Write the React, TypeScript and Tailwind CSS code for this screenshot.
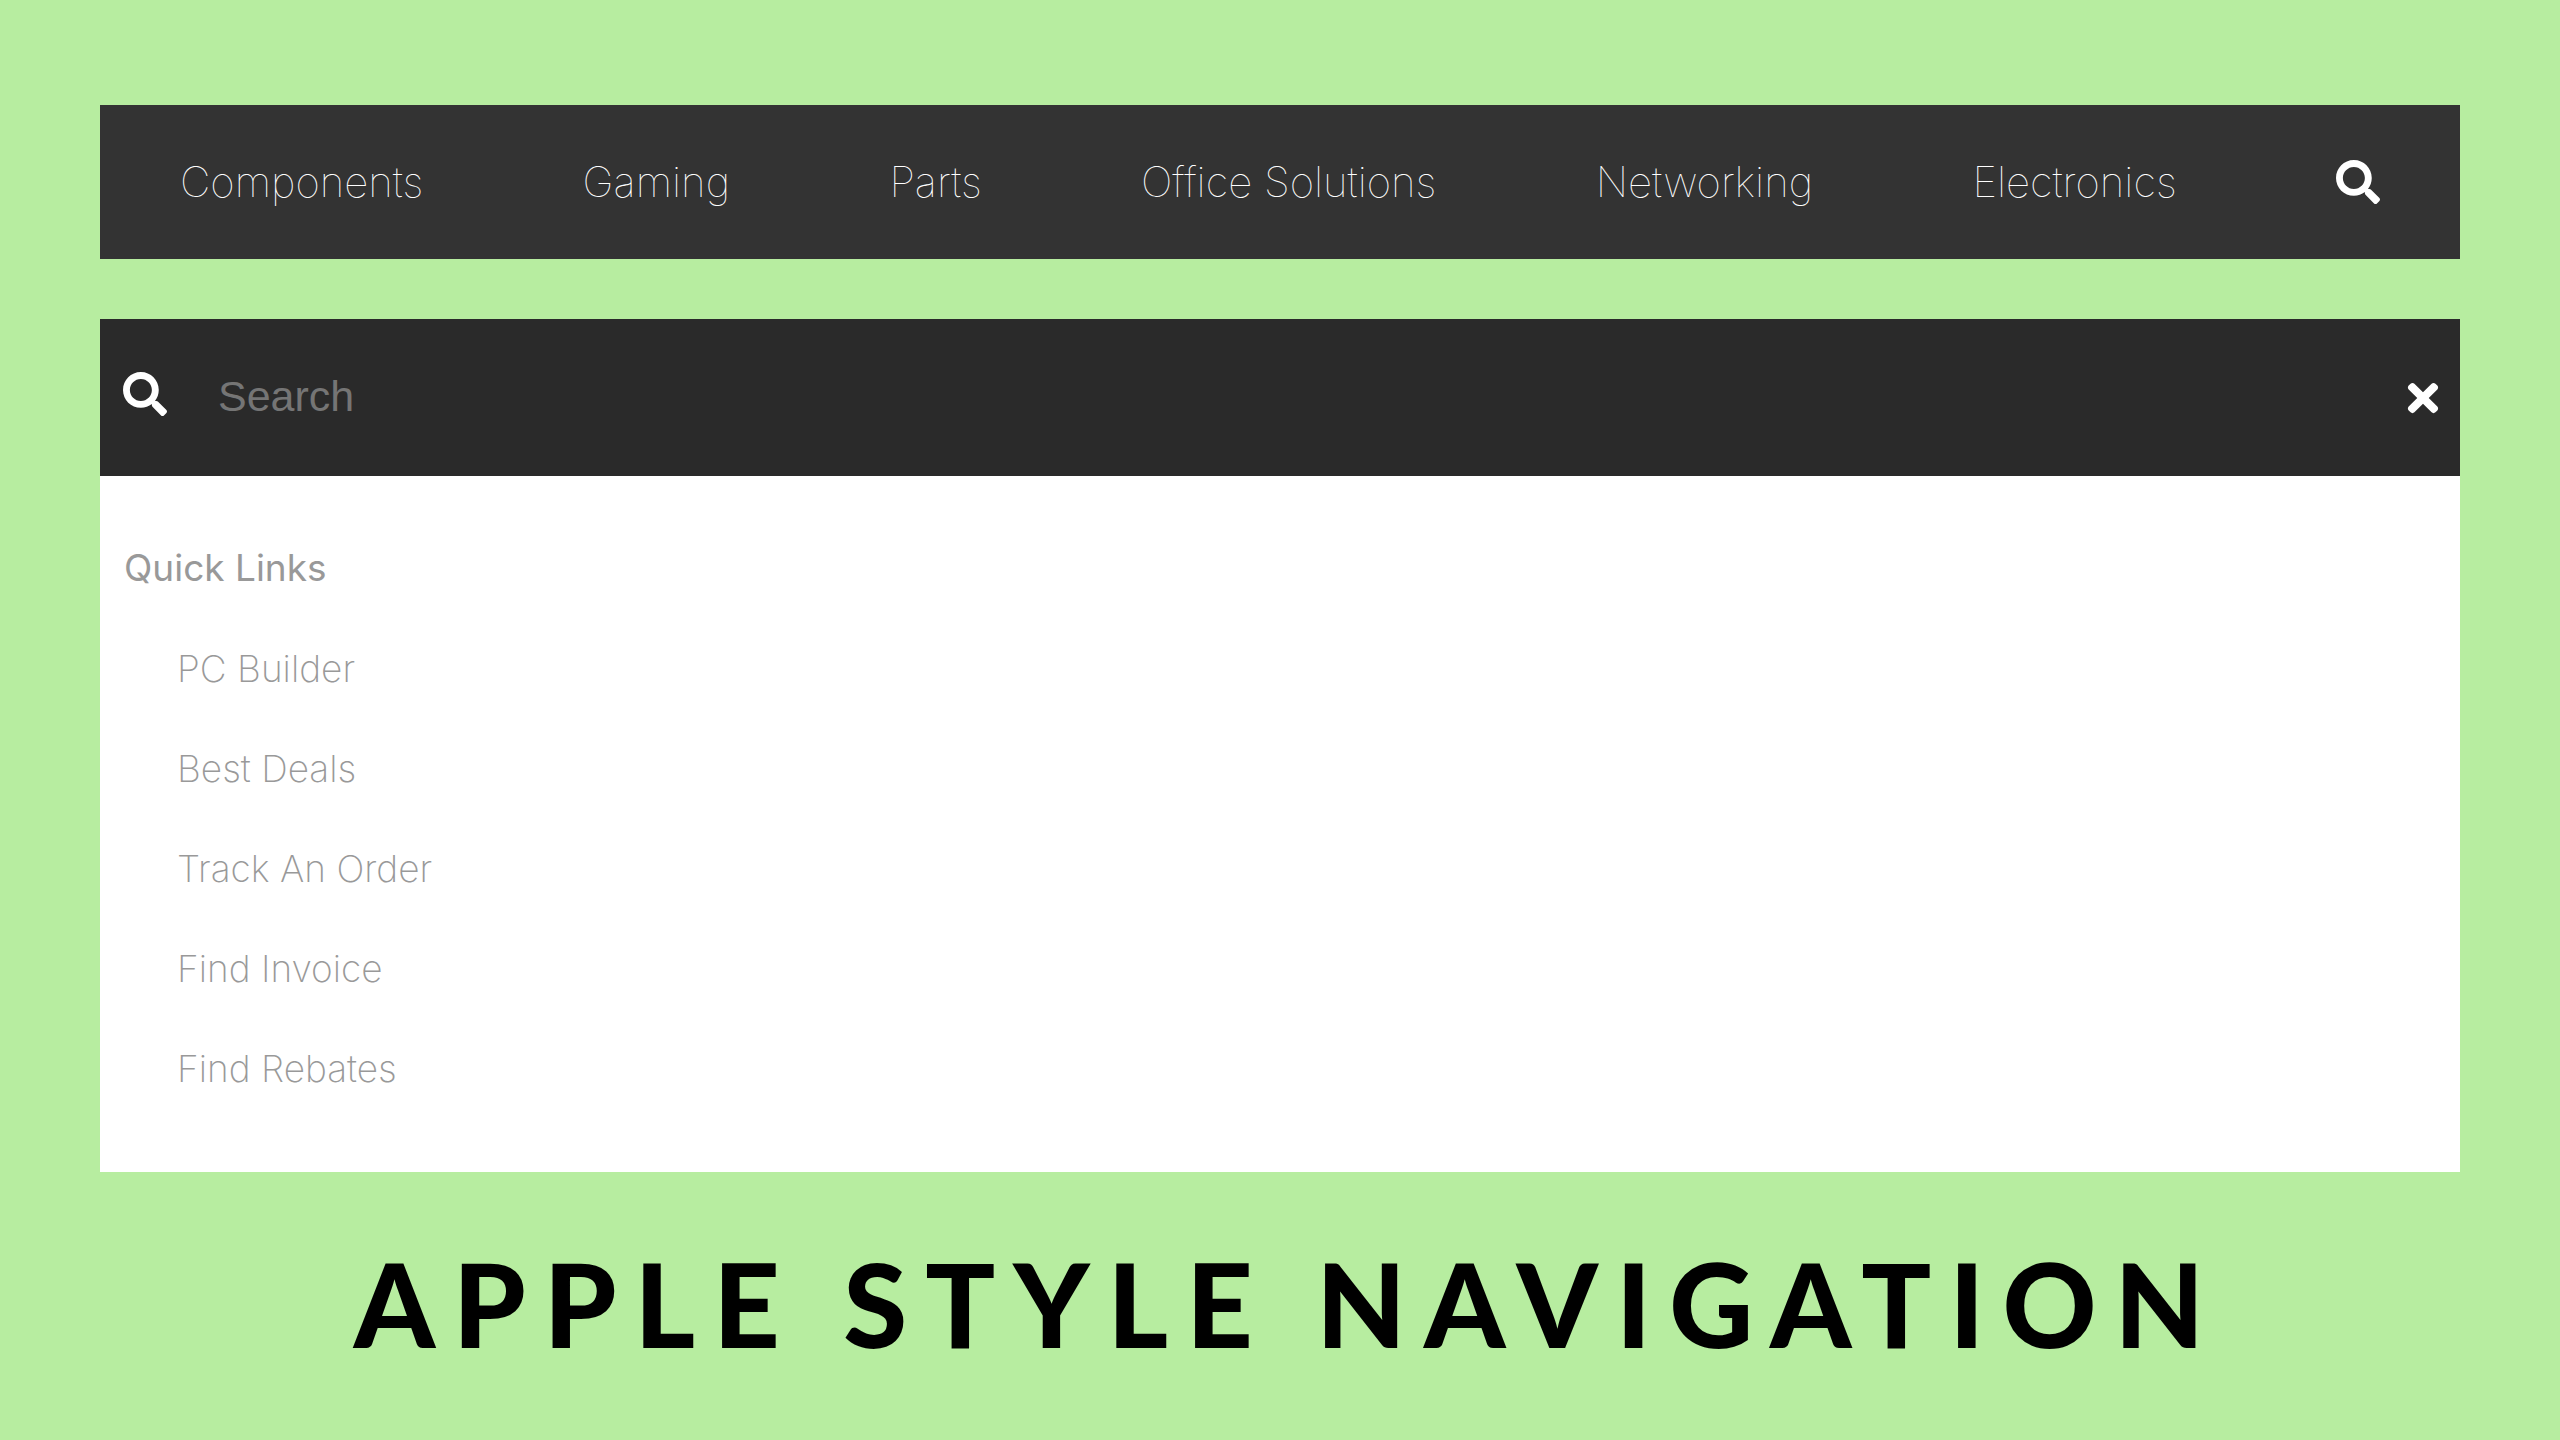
import { FaSearch, FaTimes } from "react-icons/fa";

const categories = ["Components", "Gaming", "Parts", "Office Solutions", "Networking", "Electronics"];
const quickLinks = ["PC Builder", "Best Deals", "Track An Order", "Find Invoice", "Find Rebates"];

function NavBar() {
  return (
    <nav aria-label="Main" className="bg-[#333333] px-20 h-[154px] flex items-center">
      <ul className="flex w-full items-center justify-between text-[42px] leading-[52px] font-thin text-white">
        {categories.map((name) => (
          <li key={name}>
            <a href="#">{name}</a>
          </li>
        ))}
        <li>
          <button type="button" aria-label="Open search" className="block">
            <FaSearch className="size-11" />
          </button>
        </li>
      </ul>
    </nav>
  );
}

function SearchPanel() {
  return (
    <section className="bg-white">
      <form role="search" className="flex h-[157px] items-center bg-[#2a2a2a] pl-[23px] pr-[15px] text-white">
        <label htmlFor="search" aria-label="Search" className="pb-1">
          <FaSearch className="mb-1 size-11" />
        </label>
        <input
          id="search"
          type="text"
          placeholder="Search"
          className="ml-[51px] min-w-0 flex-1 bg-transparent pb-1 font-['Liberation_Sans',sans-serif] text-[43px] leading-[52px] outline-none placeholder:text-[#757575]"
        />
        <button type="button" aria-label="Close search">
          <FaTimes className="size-11" />
        </button>
      </form>
      <div className="px-6 pt-[67px] pb-[78px] text-[37px] leading-[50px] text-[#999999]">
        <h2>Quick Links</h2>
        <ul className="mt-[51px] flex flex-col gap-[50px] pl-[53px] font-extralight">
          {quickLinks.map((name) => (
            <li key={name}>
              <a href="#">{name}</a>
            </li>
          ))}
        </ul>
      </div>
    </section>
  );
}

export default function App() {
  return (
    <main className="min-h-screen bg-[#b7eda0] px-[100px] pt-[105px] font-['Inter',sans-serif]">
      <NavBar />
      <div className="mt-[60px]">
        <SearchPanel />
      </div>
      <h1 className="mt-[62px] pl-4 text-center font-['Lato',sans-serif] text-[116px] leading-[140px] font-black tracking-[18px] text-black">
        APPLE STYLE NAVIGATION
      </h1>
    </main>
  );
}
